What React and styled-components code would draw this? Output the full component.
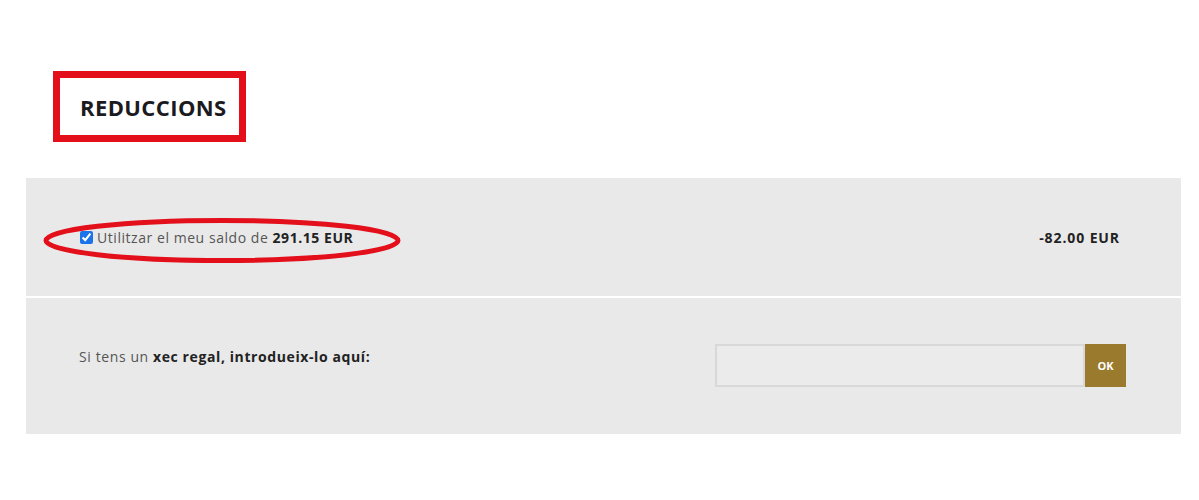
import React from "react";
import styled, { createGlobalStyle } from "styled-components";

const Global = createGlobalStyle`
  html, body { margin: 0; padding: 0; background: #ffffff; }
  body { font-family: "Open Sans", "Liberation Sans", sans-serif; color: #222; }
`;

const Page = styled.div`
  width: 1199px;
  height: 500px;
  padding-top: 71px;
  box-sizing: border-box;
  overflow: hidden;
`;

const TitleBox = styled.div`
  margin-left: 53px;
  width: 193px;
  height: 71px;
  box-sizing: border-box;
  border: 7px solid #e3101c;
  display: flex;
  align-items: center;
  padding-left: 20px;
`;

const Title = styled.h2`
  margin: 0;
  font-size: 22px;
  font-weight: 700;
  color: #1b1b1f;
  letter-spacing: 0.4px;
`;

const Panel = styled.div`
  margin: 36px 0 0 26px;
  width: 1155px;
  background: #e9e9e9;
  display: flex;
  flex-direction: column;
`;

const BalanceRow = styled.div`
  position: relative;
  height: 120px;
  display: flex;
  align-items: center;
  justify-content: space-between;
  padding: 0 61px 0 54px;
  box-sizing: border-box;
  border-bottom: 2px solid #ffffff;
`;

const CheckLabel = styled.label`
  display: flex;
  align-items: center;
  gap: 4px;
  font-size: 14px;
  letter-spacing: 0.55px;
  color: #555;
`;

const Check = styled.input`
  width: 13px;
  height: 13px;
  margin: 0;
  accent-color: #1a73e8;
`;

const Strong = styled.b`
  font-weight: 700;
  color: #222;
`;

const Amount = styled.span`
  font-size: 14px;
  font-weight: 700;
  color: #222;
  letter-spacing: 0.9px;
`;

const Ellipse = styled.svg`
  position: absolute;
  left: 17px;
  top: 40px;
  width: 358px;
  height: 45px;
  overflow: visible;
  pointer-events: none;
`;

const VoucherRow = styled.div`
  height: 136px;
  display: flex;
  align-items: flex-start;
  padding: 46px 0 0 53px;
  box-sizing: border-box;
`;

const VoucherText = styled.p`
  margin: 4px 0 0;
  width: 636px;
  font-size: 14px;
  line-height: 18px;
  letter-spacing: 0.6px;
  color: #555;
`;

const InputGroup = styled.div`
  display: flex;
`;

const CodeInput = styled.input`
  width: 370px;
  height: 43px;
  box-sizing: border-box;
  border: 2px solid #d8d8d8;
  background: #ebebeb;
  margin: 0;
  padding: 0 10px;
  font-family: inherit;
  outline: none;
`;

const OkButton = styled.button`
  width: 41px;
  height: 43px;
  border: 0;
  margin: 0;
  background: #9a7a2c;
  color: #fff;
  font-family: inherit;
  font-size: 11px;
  font-weight: 700;
  padding: 0;
`;

export default function App() {
  return (
    <Page>
      <Global />
      <TitleBox>
        <Title>REDUCCIONS</Title>
      </TitleBox>
      <Panel>
        <BalanceRow>
          <CheckLabel>
            <Check type="checkbox" defaultChecked />
            <span>
              Utilitzar el meu saldo de <Strong>291.15 EUR</Strong>
            </span>
          </CheckLabel>
          <Amount>-82.00 EUR</Amount>
          <Ellipse viewBox="0 0 358 45">
            <ellipse cx="179" cy="22.5" rx="176" ry="20" fill="none" stroke="#e3101c" strokeWidth="5" />
          </Ellipse>
        </BalanceRow>
        <VoucherRow>
          <VoucherText>
            Si tens un <Strong>xec regal, introdueix-lo aquí:</Strong>
          </VoucherText>
          <InputGroup>
            <CodeInput type="text" />
            <OkButton>OK</OkButton>
          </InputGroup>
        </VoucherRow>
      </Panel>
    </Page>
  );
}
